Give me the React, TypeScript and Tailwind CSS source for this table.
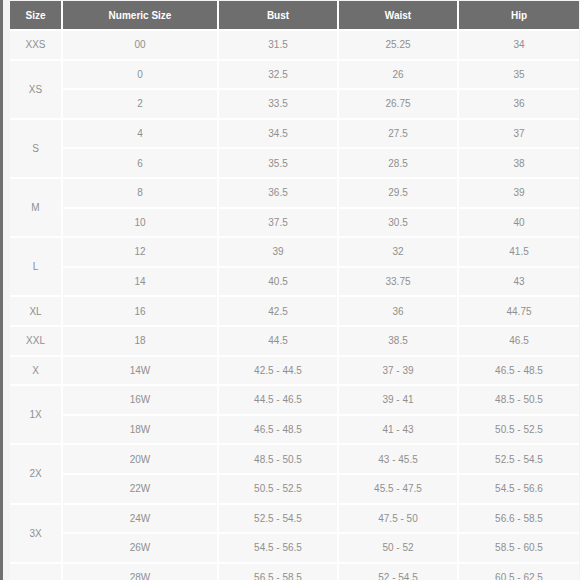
const headers = ["Size", "Numeric Size", "Bust", "Waist", "Hip"];

type Group = { size: string; rows: string[][] };

const groups: Group[] = [
  { size: "XXS", rows: [["00", "31.5", "25.25", "34"]] },
  { size: "XS", rows: [["0", "32.5", "26", "35"], ["2", "33.5", "26.75", "36"]] },
  { size: "S", rows: [["4", "34.5", "27.5", "37"], ["6", "35.5", "28.5", "38"]] },
  { size: "M", rows: [["8", "36.5", "29.5", "39"], ["10", "37.5", "30.5", "40"]] },
  { size: "L", rows: [["12", "39", "32", "41.5"], ["14", "40.5", "33.75", "43"]] },
  { size: "XL", rows: [["16", "42.5", "36", "44.75"]] },
  { size: "XXL", rows: [["18", "44.5", "38.5", "46.5"]] },
  { size: "X", rows: [["14W", "42.5 - 44.5", "37 - 39", "46.5 - 48.5"]] },
  { size: "1X", rows: [["16W", "44.5 - 46.5", "39 - 41", "48.5 - 50.5"], ["18W", "46.5 - 48.5", "41 - 43", "50.5 - 52.5"]] },
  { size: "2X", rows: [["20W", "48.5 - 50.5", "43 - 45.5", "52.5 - 54.5"], ["22W", "50.5 - 52.5", "45.5 - 47.5", "54.5 - 56.6"]] },
  { size: "3X", rows: [["24W", "52.5 - 54.5", "47.5 - 50", "56.6 - 58.5"], ["26W", "54.5 - 56.5", "50 - 52", "58.5 - 60.5"]] },
  { size: "4X", rows: [["28W", "56.5 - 58.5", "52 - 54.5", "60.5 - 62.5"], ["30W", "58.5 - 60.5", "54.5 - 57", "62.5 - 64.5"]] },
];

export default function App() {
  return (
    <div className="h-[580px] w-[580px] overflow-hidden bg-[#f3f3f3] border-l-[3px] border-[#6f6f6f] pl-[7px] pt-[1px] font-['Liberation_Sans',Arial,sans-serif]">
      <div className="grid w-[569px] grid-cols-[51px_154px_118px_118px_120px] auto-rows-[27.6px] grid-rows-[28px] gap-[2px] bg-white text-[10px]">
        {headers.map((h) => (
          <div
            key={h}
            className="flex items-center justify-center bg-[#6e6e6e] font-bold text-white"
          >
            {h}
          </div>
        ))}
        {groups.map((g) => (
          <Rows key={g.size} group={g} />
        ))}
      </div>
    </div>
  );
}

function Rows({ group }: { group: Group }) {
  return (
    <>
      <div
        className={`flex items-center justify-center bg-[#f7f7f7] text-[#8f8f8f] ${
          group.rows.length === 2 ? "row-span-2" : ""
        }`}
      >
        {group.size}
      </div>
      {group.rows.map((r, i) =>
        r.map((v, j) => (
          <div
            key={`${i}-${j}`}
            className={`flex items-center justify-center bg-[#f7f7f7] text-[#8f8f8f] ${
              j === 0 ? "col-start-2" : ""
            }`}
          >
            {v}
          </div>
        ))
      )}
    </>
  );
}
